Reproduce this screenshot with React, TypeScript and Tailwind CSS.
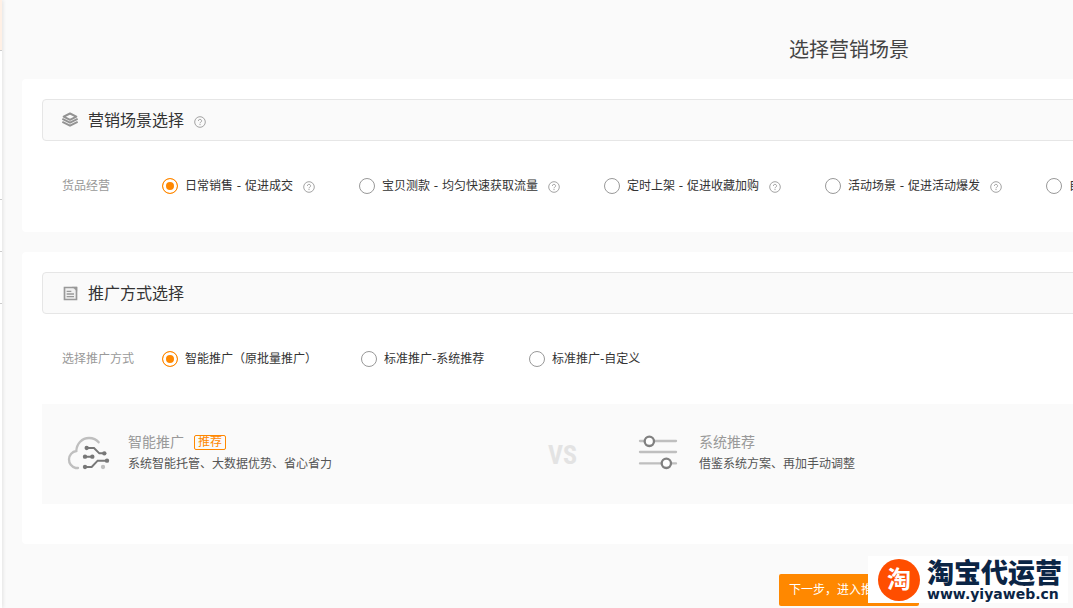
import { ReactNode } from 'react'
import { clsx } from 'clsx'

interface Option {
  value: string
  label: string
  help?: boolean
}

const SCENES: Option[] = [
  { value: 'daily', label: '日常销售 - 促进成交', help: true },
  { value: 'test', label: '宝贝测款 - 均匀快速获取流量', help: true },
  { value: 'timed', label: '定时上架 - 促进收藏加购', help: true },
  { value: 'event', label: '活动场景 - 促进活动爆发', help: true },
  { value: 'custom', label: '自定义场景', help: true },
]

const METHODS: Option[] = [
  { value: 'smart', label: '智能推广（原批量推广）' },
  { value: 'system', label: '标准推广-系统推荐' },
  { value: 'manual', label: '标准推广-自定义' },
]

function HelpIcon() {
  return (
    <svg viewBox="0 0 12 12" className="mt-0.5 h-3 w-3 shrink-0" fill="none" stroke="#999" aria-hidden="true">
      <circle cx="6" cy="6" r="5.3" strokeWidth="0.9" />
      <path d="M4.4 4.9a1.6 1.5 0 1 1 2.3 1.3c-.5.3-.7.5-.7 1.1" strokeWidth="0.9" />
      <path d="M6 8.1v1" strokeWidth="1" />
    </svg>
  )
}

function LayersIcon() {
  return (
    <svg viewBox="0 0 48 48" className="h-4 w-4" fill="none" stroke="#939393" aria-hidden="true">
      <path d="M24 4.500 43 14 24 23.500 5 14Z" strokeWidth="6" strokeLinejoin="round" />
      <path d="M1 20.500 24 32 47 20.500" strokeWidth="6" />
      <path d="M1 29.500 24 41 47 29.500" strokeWidth="6" />
    </svg>
  )
}

function DocumentIcon() {
  return (
    <svg viewBox="0 0 48 48" className="h-4 w-4" fill="none" stroke="#999" aria-hidden="true">
      <path d="M7.500 7.500h36v36h-36z" fill="#f0f0f0" strokeWidth="5" />
      <path d="M32 6h13v13z" fill="#999" strokeWidth="1" />
      <path d="M14 19h14M14 27h22M14 35h22" strokeWidth="4" />
    </svg>
  )
}

function CloudIcon() {
  return (
    <svg viewBox="75 105 135 102" className="h-[34px] w-[45px] shrink-0" fill="none" aria-hidden="true">
      <path
        d="M114 201h-7a26 26 0 0 1 2-51c1-22 17-39 38-39 12 0 22 4 29 13"
        stroke="#bfbfbf"
        strokeWidth="7"
        strokeLinecap="round"
      />
      <g stroke="#777" strokeWidth="6">
        <path d="M140 141h22l16 16h15M135 167h22M135 198h20l18-19h28" />
      </g>
      <g fill="#777">
        <circle cx="140" cy="141" r="6.500" />
        <circle cx="193" cy="157" r="6.500" />
        <circle cx="135" cy="167" r="6.500" />
        <circle cx="157" cy="167" r="6.500" />
        <circle cx="135" cy="198" r="6.500" />
        <circle cx="201" cy="179" r="6.500" />
      </g>
      <circle cx="189" cy="198" r="6.500" fill="#bfbfbf" />
    </svg>
  )
}

function SlidersIcon() {
  return (
    <svg viewBox="348 105 135 102" className="h-[34px] w-[45px] shrink-0" fill="none" overflow="visible" aria-hidden="true">
      <path d="M360 120h108M360 153h108M360 187h108" stroke="#bfbfbf" strokeWidth="7" strokeLinecap="round" />
      <g fill="#fff" stroke="#808080" strokeWidth="7">
        <circle cx="388" cy="121" r="14" />
        <circle cx="439" cy="187" r="14" />
      </g>
    </svg>
  )
}

interface PanelHeaderProps {
  icon: ReactNode
  title: string
  help?: boolean
}

function PanelHeader({ icon, title, help }: PanelHeaderProps) {
  return (
    <div className="flex h-[42px] items-center rounded border border-[#e6e6e6] bg-[#fafafa] pl-[19px]">
      {icon}
      <h2 className="mt-0.5 ml-2.5 text-base text-[#333]">{title}</h2>
      {help && (
        <span className="mt-0.5 ml-2.5">
          <HelpIcon />
        </span>
      )}
    </div>
  )
}

interface OptionRowProps {
  name: string
  legend: string
  options: Option[]
  /** Grid template of the option columns */
  columns: string
}

function OptionRow({ name, legend, options, columns }: OptionRowProps) {
  return (
    <div role="radiogroup" aria-labelledby={`${name}-legend`} className="my-[33px] flex h-6 items-center pl-5">
      <span id={`${name}-legend`} className="w-[100px] shrink-0 text-[#999]">
        {legend}
      </span>
      <div className={clsx('grid', columns)}>
        {options.map((option, index) => (
          <label key={option.value} className="flex items-center whitespace-nowrap">
            <input
              type="radio"
              name={name}
              value={option.value}
              defaultChecked={index === 0}
              className="mr-[7px] h-4 w-4 shrink-0 appearance-none rounded-full border border-[#999] bg-white checked:border-[#ff8800] checked:bg-[#ff8800] checked:shadow-[inset_0_0_0_3px_white]"
            />
            <span className="mr-2.5 text-[#333]">{option.label}</span>
            {option.help && <HelpIcon />}
          </label>
        ))}
      </div>
    </div>
  )
}

interface MethodCardProps {
  icon: ReactNode
  title: string
  description: string
  recommended?: boolean
}

function MethodCard({ icon, title, description, recommended }: MethodCardProps) {
  return (
    <div className="flex items-center gap-[18px]">
      {icon}
      <div>
        <div className="flex items-center gap-2.5">
          <h3 className="text-sm leading-[22px] text-[#999]">{title}</h3>
          {recommended && (
            <span className="rounded-xs border border-[#ff8800] px-[3px] leading-[13px] text-[#ff8800]">推荐</span>
          )}
        </div>
        <p className="leading-[22px] text-[#555]">{description}</p>
      </div>
    </div>
  )
}

function SiteBadge() {
  return (
    <div className="fixed right-[5px] bottom-[5px] flex h-[47px] w-[200px] items-center gap-[7px] bg-white pl-2.5 text-[#0b2545]">
      <span className="flex h-[42px] w-[42px] shrink-0 items-center justify-center rounded-full bg-[#ff4e00] text-2xl leading-none font-bold text-white">
        淘
      </span>
      <div className="whitespace-nowrap">
        <p className="text-[27px] leading-[29px] font-black">淘宝代运营</p>
        <p className="font-['DejaVu_Sans'] text-sm leading-3 font-bold">www.yiyaweb.cn</p>
      </div>
    </div>
  )
}

export default function App() {
  return (
    <div className="flex min-h-screen overflow-x-hidden bg-[#fafafa] font-['DejaVu_Sans','Noto_Sans_CJK_SC',sans-serif] text-xs">
      {/* Edge of the collapsed side menu */}
      <aside className="w-0.5 shrink-0 bg-white shadow-[0_0_4px_rgba(0,0,0,0.2)]">
        <div className="h-[51px] border-b border-[#ccc] bg-[#fff0e5]" />
        <div className="h-[149px] border-b border-[#ccc]" />
        <div className="h-[52px] border-b border-[#ccc]" />
        <div className="h-[52px] border-b border-[#ccc]" />
      </aside>

      <main className="ml-5 min-w-[1654px]">
        <h1 className="pt-[35px] pb-3.5 text-center text-xl leading-[30px] text-[#444]">选择营销场景</h1>

        <section className="mb-5 rounded bg-white px-5 pt-5 pb-px">
          <PanelHeader icon={<LayersIcon />} title="营销场景选择" help />
          <OptionRow
            name="scene"
            legend="货品经营"
            options={SCENES}
            columns="grid-cols-[197px_245px_221px_221px_auto]"
          />
        </section>

        <section className="rounded bg-white px-5 pt-5 pb-10">
          <PanelHeader icon={<DocumentIcon />} title="推广方式选择" />
          <OptionRow
            name="method"
            legend="选择推广方式"
            options={METHODS}
            columns="grid-cols-[199px_168px_auto]"
          />
          <div className="grid h-[100px] grid-cols-[483px_88px_1fr] items-center bg-[#fafafa] pb-0.5 pl-[23px]">
            <MethodCard
              icon={<CloudIcon />}
              title="智能推广"
              description="系统智能托管、大数据优势、省心省力"
              recommended
            />
            <span className="pt-1 font-['Liberation_Sans_Narrow','Roboto_Condensed','DejaVu_Sans_Condensed'] text-[26px] font-bold text-[#e3e3e3]">
              VS
            </span>
            <MethodCard icon={<SlidersIcon />} title="系统推荐" description="借鉴系统方案、再加手动调整" />
          </div>
        </section>

        <div className="flex justify-center pt-[30px] pb-0.5">
          <button type="button" className="h-8 rounded-xs bg-[#ff8800] px-2.5 text-white">
            下一步，进入推广设置
          </button>
        </div>
      </main>

      <SiteBadge />
    </div>
  )
}
